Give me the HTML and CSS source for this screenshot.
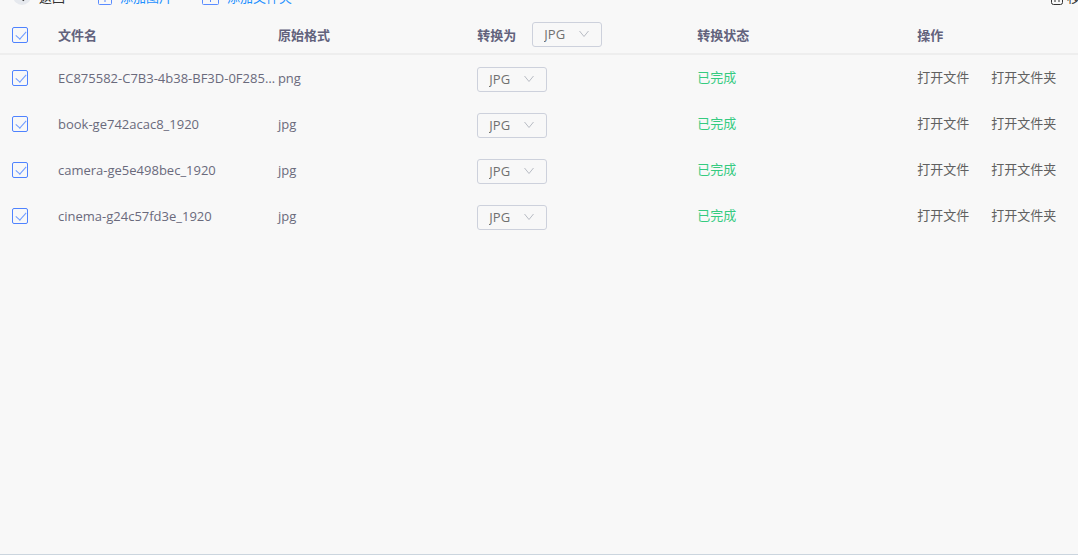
FILE: index.html
```
<!DOCTYPE html>
<html lang="zh-CN">
<head>
<meta charset="utf-8">
<title>图片格式转换</title>
<link rel="stylesheet" href="styles.css">
</head>
<body>
<svg class="defs" width="0" height="0" aria-hidden="true">
  <symbol id="chevron" viewBox="0 0 12 8"><path d="M1.5 1 6 6.500 10.500 1" fill="none" stroke="currentColor"/></symbol>
</svg>
<header class="toolbar">
  <button class="tool back" type="button"><svg class="back-icon" viewBox="0 0 18 18"><circle cx="9" cy="9" r="9" fill="#e6e9ee"/><path d="M11 5 7 9.500l4 4" fill="none" stroke="#333" stroke-width="2"/></svg>返回</button>
  <button class="tool add-image" type="button"><svg class="image-icon" viewBox="0 0 14 16"><rect x=".5" y=".5" width="13" height="15" rx="1" fill="none" stroke="currentColor"/><path d="M7 5v8M3.500 9h7" stroke="currentColor"/></svg>添加图片</button>
  <button class="tool add-folder" type="button"><svg class="folder-icon" viewBox="0 0 17 16"><rect x=".5" y=".5" width="16" height="15" rx="1" fill="none" stroke="currentColor"/><path d="M8.500 5v8M5 9h7" stroke="currentColor"/></svg>添加文件夹</button>
  <button class="tool remove" type="button"><svg class="trash-icon" viewBox="0 0 12 14"><path d="M.5 2v9.500q0 2 2 2h7q2 0 2-2V2M4 5v6M8 5v6" fill="none" stroke="currentColor"/></svg>移</button>
</header>
<main class="content">
  <table class="files">
    <colgroup><col class="col-check"><col class="col-name"><col class="col-format"><col class="col-convert"><col class="col-status"><col></colgroup>
    <thead>
      <tr>
        <th class="check"><input type="checkbox" aria-label="全选" checked></th>
        <th>文件名</th><th>原始格式</th>
        <th><div class="convert"><label for="all">转换为</label><span class="picker"><select id="all"><option>JPG</option><option>PNG</option></select><svg><use href="#chevron"/></svg></span></div></th>
        <th>转换状态</th><th>操作</th>
      </tr>
    </thead>
    <tbody>
      <tr>
        <td class="check"><input type="checkbox" aria-label="选择文件" checked></td>
        <td class="name">EC875582-C7B3-4b38-BF3D-0F285A6C91E4</td><td>png</td>
        <td class="target"><span class="picker"><select aria-label="转换为"><option>JPG</option><option>PNG</option></select><svg><use href="#chevron"/></svg></span></td>
        <td class="done">已完成</td>
        <td class="links"><div class="actions"><a href="#">打开文件</a><a href="#">打开文件夹</a></div></td>
      </tr>
      <tr>
        <td class="check"><input type="checkbox" aria-label="选择文件" checked></td>
        <td class="name">book-ge742acac8_1920</td><td>jpg</td>
        <td class="target"><span class="picker"><select aria-label="转换为"><option>JPG</option><option>PNG</option></select><svg><use href="#chevron"/></svg></span></td>
        <td class="done">已完成</td>
        <td class="links"><div class="actions"><a href="#">打开文件</a><a href="#">打开文件夹</a></div></td>
      </tr>
      <tr>
        <td class="check"><input type="checkbox" aria-label="选择文件" checked></td>
        <td class="name">camera-ge5e498bec_1920</td><td>jpg</td>
        <td class="target"><span class="picker"><select aria-label="转换为"><option>JPG</option><option>PNG</option></select><svg><use href="#chevron"/></svg></span></td>
        <td class="done">已完成</td>
        <td class="links"><div class="actions"><a href="#">打开文件</a><a href="#">打开文件夹</a></div></td>
      </tr>
      <tr>
        <td class="check"><input type="checkbox" aria-label="选择文件" checked></td>
        <td class="name">cinema-g24c57fd3e_1920</td><td>jpg</td>
        <td class="target"><span class="picker"><select aria-label="转换为"><option>JPG</option><option>PNG</option></select><svg><use href="#chevron"/></svg></span></td>
        <td class="done">已完成</td>
        <td class="links"><div class="actions"><a href="#">打开文件</a><a href="#">打开文件夹</a></div></td>
      </tr>
    </tbody>
  </table>
</main>
</body>
</html>
```
FILE: styles.css
```
* { box-sizing: border-box; }
body {
  margin: 0;
  min-height: 100vh;
  display: flex;
  flex-direction: column;
  background: #f8f8f8;
  border-bottom: 1px solid #cbd5de;
  color: #6a6a7c;
  font: 13px/20px "Open Sans", "Noto Sans CJK SC", sans-serif;
}
.defs { display: none; }
.toolbar {
  display: flex;
  align-items: flex-end;
  height: 8px;
  padding: 0 0 3px 13px;
  overflow: hidden;
}
.tool {
  display: flex;
  flex: none;
  align-items: flex-end;
  gap: 8px;
  padding: 0;
  border: 0;
  background: none;
  color: #1e90ff;
  font: inherit;
  line-height: 16px;
}
.tool svg { flex: none; }
.back, .remove { color: #333; }
.back-icon { width: 18px; height: 18px; }
.add-image { margin-left: 33px; }
.image-icon { width: 14px; height: 16px; color: #5a8cff; }
.add-folder { margin-left: 30px; }
.folder-icon { width: 17px; height: 16px; color: #5a8cff; }
.remove { width: 27px; margin-left: auto; gap: 4px; overflow: hidden; white-space: nowrap; }
.trash-icon { width: 12px; height: 14px; }
.content { flex: 1; padding-top: 8px; }
.files {
  width: 100%;
  table-layout: fixed;
  border-collapse: separate;
  border-spacing: 0;
}
.col-check { width: 58px; }
.col-name, .col-convert, .col-status { width: 20.4%; }
.col-format { width: 18.5%; }
th, td {
  padding: 0;
  text-align: left;
  vertical-align: middle;
  white-space: nowrap;
}
th {
  height: 39px;
  border-bottom: 2px solid #eeeeee;
  color: #62627c;
  font-weight: 700;
}
td { height: 46px; }
.check { padding-left: 12px; }
input[type="checkbox"] {
  appearance: none;
  display: block;
  width: 16px;
  height: 16px;
  margin: 0;
  border: 1px solid #4f83ff;
  border-radius: 2px;
}
input[type="checkbox"]:checked::before {
  content: "";
  display: block;
  width: 5px;
  height: 9px;
  margin: 1px 0 0 5px;
  border: solid #6f9bff;
  border-width: 0 1px 1px 0;
  transform: rotate(42deg);
}
.name { overflow: hidden; padding-right: 2px; text-overflow: ellipsis; }
.convert { display: flex; align-items: center; gap: 16px; }
.target { padding-top: 2px; }
.picker { position: relative; display: block; width: 70px; height: 25px; }
.picker select {
  appearance: none;
  display: block;
  width: 100%;
  height: 100%;
  padding: 0 11px 1px;
  border: 1px solid #cdd1dc;
  border-radius: 3px;
  background: none;
  color: #707070;
  font: inherit;
  font-weight: 400;
}
.picker svg {
  position: absolute;
  right: 12px;
  top: 8px;
  width: 12px;
  height: 8px;
  color: #b8bcc4;
  pointer-events: none;
}
.done { padding-bottom: 2px; color: #35cb80; }
.links { padding-bottom: 2px; }
.actions { display: flex; gap: 22px; }
.actions a { color: #606060; text-decoration: none; }
```
